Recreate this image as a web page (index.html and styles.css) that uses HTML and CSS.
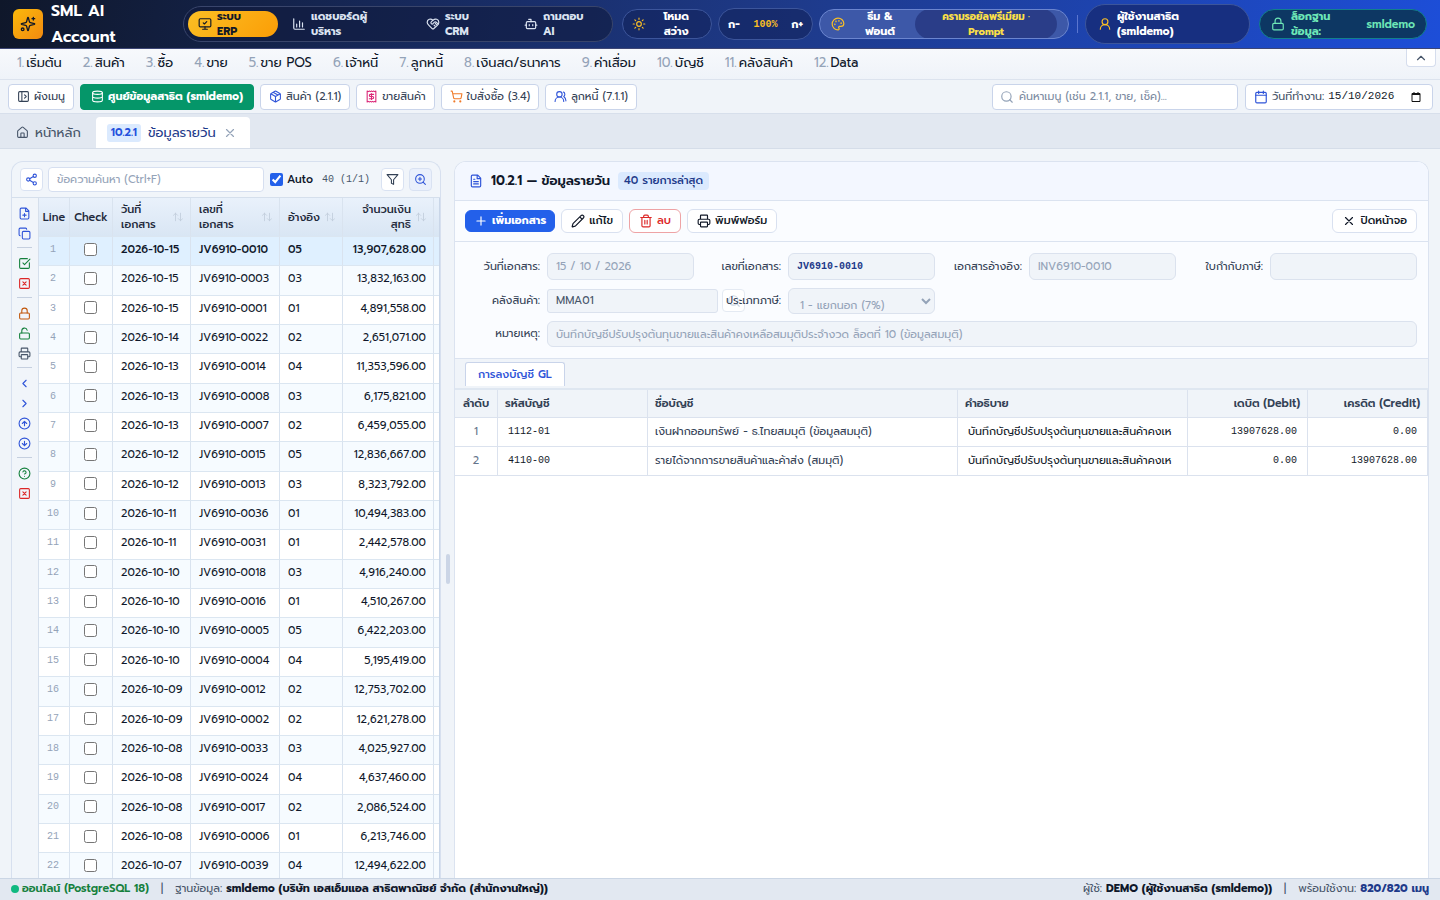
FILE: index.html
```html
<!DOCTYPE html>
<html lang="th">
<head>
<meta charset="utf-8">
<meta name="viewport" content="width=device-width, initial-scale=1">
<title>SML AI Account</title>
<link rel="stylesheet" href="styles.css">
</head>
<body>
<svg class="sprite" aria-hidden="true">
  <symbol id="sparkles" viewBox="0 0 24 24"><path d="M9.937 15.5A2 2 0 0 0 8.5 14.063l-6.135-1.582a.5.5 0 0 1 0-.962L8.5 9.936A2 2 0 0 0 9.937 8.5l1.582-6.135a.5.5 0 0 1 .963 0L14.063 8.5A2 2 0 0 0 15.5 9.937l6.135 1.581a.5.5 0 0 1 0 .964L15.5 14.063a2 2 0 0 0-1.437 1.437l-1.582 6.135a.5.5 0 0 1-.963 0z"/><path d="M20 2v4M22 4h-4"/><circle cx="4" cy="20" r="2"/></symbol>
  <symbol id="monitor" viewBox="0 0 24 24"><path d="m9 10 2 2 4-4"/><rect width="20" height="14" x="2" y="3" rx="2"/><path d="M12 17v4M8 21h8"/></symbol>
  <symbol id="chart" viewBox="0 0 24 24"><path d="M3 3v16a2 2 0 0 0 2 2h16M8 17v-5M13 17V7M18 17v-7"/></symbol>
  <symbol id="heart" viewBox="0 0 24 24"><path d="M19.4 14.4C21 12.9 22 11.200 22 9a5.500 5.500 0 0 0-9.600-3.600.6.6 0 0 1-.8 0A5.500 5.500 0 0 0 2 9c0 2.300 1.500 4 3 5.500l5.500 5.300a2 2 0 0 0 3 0z"/><path d="m12 5.500-3 3a2 2 0 0 0 3 2.800l2-2a3 3 0 0 1 4 0l2.500 2.500M15.500 15.500 13.800 14M18 13l-2-2"/></symbol>
  <symbol id="bot" viewBox="0 0 24 24"><path d="M12 8V4H8"/><rect width="16" height="12" x="4" y="8" rx="2"/><path d="M2 14h2M20 14h2M15 13v2M9 13v2"/></symbol>
  <symbol id="sun" viewBox="0 0 24 24"><circle cx="12" cy="12" r="4"/><path d="M12 2v2M12 20v2M4.900 4.900l1.400 1.400M17.700 17.700l1.400 1.400M2 12h2M20 12h2M6.300 17.700l-1.400 1.400M19.100 4.900l-1.400 1.400"/></symbol>
  <symbol id="palette" viewBox="0 0 24 24"><path d="M12 22a1 1 0 0 1 0-20 10 9 0 0 1 10 9 5 5 0 0 1-5 5h-2.250a1.750 1.750 0 0 0-1.400 2.800l.3.4a1.750 1.750 0 0 1-1.400 2.800z"/><circle cx="13.500" cy="6.500" r=".5"/><circle cx="17.500" cy="10.500" r=".5"/><circle cx="6.500" cy="12.500" r=".5"/><circle cx="8.500" cy="7.500" r=".5"/></symbol>
  <symbol id="user" viewBox="0 0 24 24"><circle cx="12" cy="8" r="5"/><path d="M20 21a8 8 0 0 0-16 0"/></symbol>
  <symbol id="lock" viewBox="0 0 24 24"><rect width="18" height="11" x="3" y="11" rx="2"/><path d="M7 11V7a5 5 0 0 1 10 0v4"/></symbol>
  <symbol id="unlock" viewBox="0 0 24 24"><rect width="18" height="11" x="3" y="11" rx="2"/><path d="M7 11V7a5 5 0 0 1 9.900-1"/></symbol>
  <symbol id="panel" viewBox="0 0 24 24"><rect width="18" height="18" x="3" y="3" rx="2"/><path d="M9 3v18M14 9l3 3-3 3"/></symbol>
  <symbol id="database" viewBox="0 0 24 24"><ellipse cx="12" cy="5" rx="9" ry="3"/><path d="M3 5v14a9 3 0 0 0 18 0V5M3 12a9 3 0 0 0 18 0"/></symbol>
  <symbol id="box" viewBox="0 0 24 24"><path d="M11 21.700a2 2 0 0 0 2 0l7-4a2 2 0 0 0 1-1.700V8a2 2 0 0 0-1-1.700l-7-4a2 2 0 0 0-2 0l-7 4A2 2 0 0 0 3 8v8a2 2 0 0 0 1 1.700zM12 22V12M3.300 7 12 12l8.700-5M7.500 4.300l9 5.100"/></symbol>
  <symbol id="receipt" viewBox="0 0 24 24"><path d="M4 2v20l2-1 2 1 2-1 2 1 2-1 2 1 2-1 2 1V2l-2 1-2-1-2 1-2-1-2 1-2-1-2 1z"/><path d="M16 8h-6a2 2 0 1 0 0 4h4a2 2 0 1 1 0 4H8M12 17.500v-11"/></symbol>
  <symbol id="cart" viewBox="0 0 24 24"><circle cx="8" cy="21" r="1"/><circle cx="19" cy="21" r="1"/><path d="M2 2h2l2.700 12.400a2 2 0 0 0 2 1.600h9.800a2 2 0 0 0 2-1.600L22 7H5.100"/></symbol>
  <symbol id="users" viewBox="0 0 24 24"><path d="M18 21a8 8 0 0 0-16 0"/><circle cx="10" cy="8" r="5"/><path d="M22 20c0-3.400-2-6.500-4-8a5 5 0 0 0-.4-8.300"/></symbol>
  <symbol id="search" viewBox="0 0 24 24"><circle cx="11" cy="11" r="8"/><path d="m21 21-4.300-4.300"/></symbol>
  <symbol id="calendar" viewBox="0 0 24 24"><path d="M8 2v4M16 2v4M3 9h18"/><rect width="18" height="18" x="3" y="4" rx="2"/></symbol>
  <symbol id="native-calendar" viewBox="0 0 24 24"><path d="M4 5h16v16H4zM4 7h16M8 2v3M16 2v3"/></symbol>
  <symbol id="up" viewBox="0 0 24 24"><path d="m18 15-6-6-6 6"/></symbol>
  <symbol id="left" viewBox="0 0 24 24"><path d="m15 18-6-6 6-6"/></symbol>
  <symbol id="right" viewBox="0 0 24 24"><path d="m9 18 6-6-6-6"/></symbol>
  <symbol id="home" viewBox="0 0 24 24"><path d="M15 21v-7a1 1 0 0 0-1-1h-4a1 1 0 0 0-1 1v7"/><path d="M3 10a2 2 0 0 1 .7-1.500l7-6a2 2 0 0 1 2.600 0l7 6A2 2 0 0 1 21 10v9a2 2 0 0 1-2 2H5a2 2 0 0 1-2-2z"/></symbol>
  <symbol id="x" viewBox="0 0 24 24"><path d="M18 6 6 18M6 6l12 12"/></symbol>
  <symbol id="share" viewBox="0 0 24 24"><circle cx="18" cy="5" r="3"/><circle cx="6" cy="12" r="3"/><circle cx="18" cy="19" r="3"/><path d="m8.600 13.500 6.800 4M15.400 6.500l-6.800 4"/></symbol>
  <symbol id="funnel" viewBox="0 0 24 24"><path d="M22 3H2l8 9.500V19l4 2v-8.500z"/></symbol>
  <symbol id="zoom" viewBox="0 0 24 24"><circle cx="11" cy="11" r="8"/><path d="m21 21-4.300-4.300M11 8v6M8 11h6"/></symbol>
  <symbol id="file-plus" viewBox="0 0 24 24"><path d="M15 2H6a2 2 0 0 0-2 2v16a2 2 0 0 0 2 2h12a2 2 0 0 0 2-2V7zM14 2v6h6M9 15h6M12 12v6"/></symbol>
  <symbol id="copy" viewBox="0 0 24 24"><rect width="14" height="14" x="8" y="8" rx="2"/><path d="M4 16a2 2 0 0 1-2-2V4a2 2 0 0 1 2-2h10a2 2 0 0 1 2 2"/></symbol>
  <symbol id="check-square" viewBox="0 0 24 24"><path d="M21 10.700V19a2 2 0 0 1-2 2H5a2 2 0 0 1-2-2V5a2 2 0 0 1 2-2h12.300M9 11l3 3L22 4"/></symbol>
  <symbol id="x-square" viewBox="0 0 24 24"><rect width="18" height="18" x="3" y="3" rx="2"/><path d="m15 9-6 6M9 9l6 6"/></symbol>
  <symbol id="printer" viewBox="0 0 24 24"><path d="M6 18H4a2 2 0 0 1-2-2v-5a2 2 0 0 1 2-2h16a2 2 0 0 1 2 2v5a2 2 0 0 1-2 2h-2M6 9V3a1 1 0 0 1 1-1h10a1 1 0 0 1 1 1v6"/><rect width="12" height="8" x="6" y="14" rx="1"/></symbol>
  <symbol id="circle-up" viewBox="0 0 24 24"><circle cx="12" cy="12" r="10"/><path d="m16 12-4-4-4 4M12 16V8"/></symbol>
  <symbol id="circle-down" viewBox="0 0 24 24"><circle cx="12" cy="12" r="10"/><path d="m8 12 4 4 4-4M12 8v8"/></symbol>
  <symbol id="help" viewBox="0 0 24 24"><circle cx="12" cy="12" r="10"/><path d="M9.100 9a3 3 0 0 1 5.800 1c0 2-3 3-3 3M12 17h.01"/></symbol>
  <symbol id="file-text" viewBox="0 0 24 24"><path d="M15 2H6a2 2 0 0 0-2 2v16a2 2 0 0 0 2 2h12a2 2 0 0 0 2-2V7zM14 2v6h6M10 9H8M16 13H8M16 17H8"/></symbol>
  <symbol id="plus" viewBox="0 0 24 24"><path d="M5 12h14M12 5v14"/></symbol>
  <symbol id="pencil" viewBox="0 0 24 24"><path d="M21.200 6.800a1 1 0 0 0-4-4L3.800 16.200a2 2 0 0 0-.5.8L2 21.400a.5.5 0 0 0 .6.6L7 20.700a2 2 0 0 0 .8-.5zM15 5l4 4"/></symbol>
  <symbol id="trash" viewBox="0 0 24 24"><path d="M3 6h18M19 6v14a2 2 0 0 1-2 2H7a2 2 0 0 1-2-2V6M8 6V4a2 2 0 0 1 2-2h4a2 2 0 0 1 2 2v2M10 11v6M14 11v6"/></symbol>
  <symbol id="sort" viewBox="0 0 24 24"><path d="m1 8 5-5 5 5M6 3v18M13 16l5 5 5-5M18 3v18"/></symbol>
</svg>

<header class="topbar">
  <div class="brand"><span class="logo"><svg class="icon icon-lg"><use href="#sparkles"/></svg></span><strong>SML AI<br>Account</strong></div>
  <nav class="modes">
    <button class="mode active"><svg class="icon"><use href="#monitor"/></svg><span>ระบบ<br>ERP</span></button>
    <button class="mode wide"><svg class="icon"><use href="#chart"/></svg><span>แดชบอร์ดผู้<br>บริหาร</span></button>
    <button class="mode"><svg class="icon"><use href="#heart"/></svg><span>ระบบ<br>CRM</span></button>
    <button class="mode"><svg class="icon"><use href="#bot"/></svg><span>ถามตอบ<br>AI</span></button>
  </nav>
  <button class="pill light-mode"><svg class="icon gold"><use href="#sun"/></svg><span>โหมด<br>สว่าง</span></button>
  <div class="pill font-size"><button>ก-</button><span class="mono gold">100%</span><button>ก+</button></div>
  <button class="pill theme"><svg class="icon gold"><use href="#palette"/></svg><span class="theme-name">ธีม &amp;<br>ฟอนต์</span><span class="theme-value">ครามรอยัลพรีเมียม ·<br>Prompt</span></button>
  <span class="divider"></span>
  <div class="pill account"><svg class="icon gold"><use href="#user"/></svg><span>ผู้ใช้งานสาธิต<br>(smldemo)</span></div>
  <div class="pill db"><svg class="icon"><use href="#lock"/></svg><span>ล็อกฐาน<br>ข้อมูล:</span><b>smldemo</b></div>
</header>

<nav class="menu">
  <a href="#"><i>1.</i>เริ่มต้น</a><a href="#"><i>2.</i>สินค้า</a><a href="#"><i>3.</i>ซื้อ</a><a href="#"><i>4.</i>ขาย</a><a href="#"><i>5.</i>ขาย POS</a><a href="#"><i>6.</i>เจ้าหนี้</a><a href="#"><i>7.</i>ลูกหนี้</a><a href="#"><i>8.</i>เงินสด/ธนาคาร</a><a href="#"><i>9.</i>ค่าเสื่อม</a><a href="#"><i>10.</i>บัญชี</a><a href="#"><i>11.</i>คลังสินค้า</a><a href="#"><i>12.</i>Data</a>
  <button class="collapse" aria-label="ย่อเมนู"><svg class="icon"><use href="#up"/></svg></button>
</nav>

<div class="shortcuts">
  <button class="shortcut"><svg class="icon"><use href="#panel"/></svg>ผังเมนู</button>
  <button class="shortcut center"><svg class="icon"><use href="#database"/></svg>ศูนย์ข้อมูลสาธิต (smldemo)</button>
  <button class="shortcut"><svg class="icon blue"><use href="#box"/></svg>สินค้า (2.1.1)</button>
  <button class="shortcut"><svg class="icon pink"><use href="#receipt"/></svg>ขายสินค้า</button>
  <button class="shortcut"><svg class="icon orange"><use href="#cart"/></svg>ใบสั่งซื้อ (3.4)</button>
  <button class="shortcut"><svg class="icon blue"><use href="#users"/></svg>ลูกหนี้ (7.1.1)</button>
  <label class="search"><svg class="icon"><use href="#search"/></svg><input type="text" aria-label="ค้นหาเมนู" placeholder="ค้นหาเมนู (เช่น 2.1.1, ขาย, เช็ค)..."></label>
  <div class="workdate"><svg class="icon blue"><use href="#calendar"/></svg><label for="workdate">วันที่ทำงาน:</label><input class="mono" id="workdate" type="text" value="15/10/2026"><button aria-label="เลือกวันที่"><svg class="icon icon-sm"><use href="#native-calendar"/></svg></button></div>
</div>

<div class="tabs">
  <a class="tab" href="#"><svg class="icon"><use href="#home"/></svg>หน้าหลัก</a>
  <div class="tab current"><b>10.2.1</b><a href="#">ข้อมูลรายวัน</a><button aria-label="ปิดแท็บ"><svg class="icon"><use href="#x"/></svg></button></div>
</div>

<main class="workspace">
  <section class="list">
    <div class="list-tools">
      <button class="square blue" aria-label="แชร์"><svg class="icon"><use href="#share"/></svg></button>
      <input class="find" type="text" aria-label="ค้นหา" placeholder="ข้อความค้นหา (Ctrl+F)">
      <label class="auto"><input type="checkbox" checked>Auto</label>
      <span class="count mono">40 (1/1)</span>
      <button class="square" aria-label="ตัวกรอง"><svg class="icon"><use href="#funnel"/></svg></button>
      <button class="square tinted" aria-label="ขยาย"><svg class="icon"><use href="#zoom"/></svg></button>
    </div>
    <div class="list-body">
      <div class="rail">
        <button class="blue" aria-label="เพิ่ม"><svg class="icon"><use href="#file-plus"/></svg></button>
        <button class="blue" aria-label="คัดลอก"><svg class="icon"><use href="#copy"/></svg></button>
        <hr>
        <button class="green" aria-label="เลือกทั้งหมด"><svg class="icon"><use href="#check-square"/></svg></button>
        <button class="red" aria-label="ไม่เลือก"><svg class="icon"><use href="#x-square"/></svg></button>
        <hr>
        <button class="rust" aria-label="ล็อก"><svg class="icon"><use href="#lock"/></svg></button>
        <button class="green" aria-label="ปลดล็อก"><svg class="icon"><use href="#unlock"/></svg></button>
        <button aria-label="พิมพ์"><svg class="icon"><use href="#printer"/></svg></button>
        <hr>
        <button class="blue" aria-label="ก่อนหน้า"><svg class="icon"><use href="#left"/></svg></button>
        <button class="blue" aria-label="ถัดไป"><svg class="icon"><use href="#right"/></svg></button>
        <button class="blue" aria-label="แรกสุด"><svg class="icon"><use href="#circle-up"/></svg></button>
        <button class="blue" aria-label="ท้ายสุด"><svg class="icon"><use href="#circle-down"/></svg></button>
        <hr>
        <button class="green" aria-label="ช่วยเหลือ"><svg class="icon"><use href="#help"/></svg></button>
        <button class="red" aria-label="ปิด"><svg class="icon"><use href="#x-square"/></svg></button>
      </div>
      <div class="grid-wrap">
        <table class="docs">
          <colgroup><col class="c-line"><col class="c-check"><col class="c-date"><col class="c-doc"><col class="c-ref"><col class="c-amount"><col class="c-more"></colgroup>
          <thead><tr>
            <th class="mid">Line</th><th class="mid">Check</th>
            <th><div class="sortable"><span>วันที่<br>เอกสาร</span><svg class="icon"><use href="#sort"/></svg></div></th>
            <th><div class="sortable"><span>เลขที่<br>เอกสาร</span><svg class="icon"><use href="#sort"/></svg></div></th>
            <th><div class="sortable"><span>อ้างอิง</span><svg class="icon"><use href="#sort"/></svg></div></th>
            <th><div class="sortable end"><span>จำนวนเงิน<br>สุทธิ</span><svg class="icon"><use href="#sort"/></svg></div></th>
            <th></th>
          </tr></thead>
          <tbody id="rows"></tbody>
        </table>
      </div>
    </div>
  </section>
  <div class="splitter"><span></span></div>
  <section class="detail">
    <h1 class="detail-title"><svg class="icon blue"><use href="#file-text"/></svg>10.2.1 — ข้อมูลรายวัน<span>40 รายการล่าสุด</span></h1>
    <div class="actions">
      <button class="action primary"><svg class="icon"><use href="#plus"/></svg>เพิ่มเอกสาร</button>
      <button class="action"><svg class="icon"><use href="#pencil"/></svg>แก้ไข</button>
      <button class="action danger"><svg class="icon"><use href="#trash"/></svg>ลบ</button>
      <button class="action"><svg class="icon"><use href="#printer"/></svg>พิมพ์ฟอร์ม</button>
      <button class="action close"><svg class="icon"><use href="#x"/></svg>ปิดหน้าจอ</button>
    </div>
    <form class="form">
      <label for="f-date">วันที่เอกสาร:</label><input id="f-date" value="15 / 10 / 2026" disabled>
      <label for="f-doc">เลขที่เอกสาร:</label><input class="mono docno" id="f-doc" value="JV6910-0010" disabled>
      <label for="f-ref">เอกสารอ้างอิง:</label><input id="f-ref" value="INV6910-0010" disabled>
      <label for="f-tax">ใบกำกับภาษี:</label><input id="f-tax" value="" disabled>
      <label for="f-wh">คลังสินค้า:</label>
      <div class="lookup"><input id="f-wh" value="MMA01" disabled><button type="button" aria-label="ค้นหาคลัง" disabled><svg class="icon"><use href="#search"/></svg></button></div>
      <label class="over" for="f-vat">ประเภทภาษี:</label>
      <div class="vat"><select id="f-vat" disabled><option>1 - แยกนอก (7%)</option></select></div>
      <label class="row3" for="f-note">หมายเหตุ:</label><input class="note" id="f-note" value="บันทึกบัญชีปรับปรุงต้นทุนขายและสินค้าคงเหลือสมมุติประจำงวด ล็อตที่ 10 (ข้อมูลสมมุติ)" disabled>
    </form>
    <div class="subtabs"><button>การลงบัญชี GL</button></div>
    <table class="gl">
      <colgroup><col class="g-no"><col class="g-code"><col class="g-name"><col class="g-desc"><col class="g-num"><col class="g-num"></colgroup>
      <thead><tr><th class="mid">ลำดับ</th><th>รหัสบัญชี</th><th>ชื่อบัญชี</th><th>คำอธิบาย</th><th class="num">เดบิต (Debit)</th><th class="num">เครดิต (Credit)</th></tr></thead>
      <tbody>
        <tr><td class="mid">1</td><td class="mono inset">1112-01</td><td>เงินฝากออมทรัพย์ - ธ.ไทยสมมุติ (ข้อมูลสมมุติ)</td><td class="inset"><div class="clip">บันทึกบัญชีปรับปรุงต้นทุนขายและสินค้าคงเห</div></td><td class="num mono inset">13907628.00</td><td class="num mono inset">0.00</td></tr>
        <tr><td class="mid">2</td><td class="mono inset">4110-00</td><td>รายได้จากการขายสินค้าและค้าส่ง (สมมุติ)</td><td class="inset"><div class="clip">บันทึกบัญชีปรับปรุงต้นทุนขายและสินค้าคงเห</div></td><td class="num mono inset">0.00</td><td class="num mono inset">13907628.00</td></tr>
      </tbody>
    </table>
  </section>
</main>

<footer class="status">
  <span class="dot"></span><b class="online">ออนไลน์ (PostgreSQL 18)</b><span class="bar">|</span><span>ฐานข้อมูล: <b>smldemo (บริษัท เอสเอ็มแอล สาธิตพาณิชย์ จำกัด (สำนักงานใหญ่))</b></span>
  <span class="who">ผู้ใช้: <b>DEMO (ผู้ใช้งานสาธิต (smldemo))</b></span><span class="bar">|</span><span>พร้อมใช้งาน: <b class="ready">820/820 เมนู</b></span>
</footer>
<script src="app.js"></script>
</body>
</html>
```
FILE: app.js
```js
const docs = [
  ["2026-10-15", "0010", "05", "13,907,628.00"],
  ["2026-10-15", "0003", "03", "13,832,163.00"],
  ["2026-10-15", "0001", "01", "4,891,558.00"],
  ["2026-10-14", "0022", "02", "2,651,071.00"],
  ["2026-10-13", "0014", "04", "11,353,596.00"],
  ["2026-10-13", "0008", "03", "6,175,821.00"],
  ["2026-10-13", "0007", "02", "6,459,055.00"],
  ["2026-10-12", "0015", "05", "12,836,667.00"],
  ["2026-10-12", "0013", "03", "8,323,792.00"],
  ["2026-10-11", "0036", "01", "10,494,383.00"],
  ["2026-10-11", "0031", "01", "2,442,578.00"],
  ["2026-10-10", "0018", "03", "4,916,240.00"],
  ["2026-10-10", "0016", "01", "4,510,267.00"],
  ["2026-10-10", "0005", "05", "6,422,203.00"],
  ["2026-10-10", "0004", "04", "5,195,419.00"],
  ["2026-10-09", "0012", "02", "12,753,702.00"],
  ["2026-10-09", "0002", "02", "12,621,278.00"],
  ["2026-10-08", "0033", "03", "4,025,927.00"],
  ["2026-10-08", "0024", "04", "4,637,460.00"],
  ["2026-10-08", "0017", "02", "2,086,524.00"],
  ["2026-10-08", "0006", "01", "6,213,746.00"],
  ["2026-10-07", "0039", "04", "12,494,622.00"]
];

document.getElementById("rows").innerHTML = docs.map(([date, no, ref, amount], i) => `
  <tr>
    <td class="mid mono line">${i + 1}</td>
    <td class="mid"><input type="checkbox" aria-label="เลือกรายการ ${i + 1}"></td>
    <td>${date}</td><td>JV6910-${no}</td><td>${ref}</td><td class="num">${amount}</td><td></td>
  </tr>`).join("");
```
FILE: styles.css
```css
* { box-sizing: border-box; }
body {
  margin: 0;
  height: 100vh;
  display: flex;
  flex-direction: column;
  overflow: hidden;
  background: #f0f4f9;
  color: #0f172a;
  font: 12px/1.4 Prompt, "Noto Sans", "Noto Sans Thai", sans-serif;
}
button, input, select { font: inherit; color: inherit; }
button { padding: 0; border: 0; background: none; white-space: nowrap; cursor: pointer; }
a { color: inherit; text-decoration: none; }
.mono { font-family: "Liberation Mono", monospace; }
.sprite { position: absolute; width: 0; height: 0; }
.icon { width: 14px; height: 14px; flex: none; fill: none; stroke: currentColor; stroke-width: 2; stroke-linecap: round; stroke-linejoin: round; }
.icon-lg { width: 16px; height: 16px; }
.icon-sm { width: 12px; height: 12px; stroke-linecap: butt; stroke-linejoin: miter; }
.gold { color: #fbbf24; }
.blue { color: #2f54d8; }
.pink { color: #db2777; }
.orange { color: #f07a28; }
.green { color: #15803d; }
.red { color: #dc2626; }
.rust { color: #c2570c; }

.topbar {
  flex: none;
  height: 49px;
  display: flex;
  align-items: center;
  padding: 0 13px;
  border-bottom: 1px solid #3d4675;
  background: linear-gradient(100deg, #0f172a 0%, #1e3a8a 55%, #1d4ed8 100%);
  color: #fff;
  font-size: 11px;
  font-weight: 700;
  line-height: 15px;
  white-space: nowrap;
}
.brand { flex: 1 1 170px; display: flex; align-items: center; gap: 8px; font-size: 16px; line-height: 26px; }
.brand strong { font-weight: 600; }
.logo { display: grid; place-items: center; width: 30px; height: 30px; border-radius: 6px; background: linear-gradient(135deg, #fbb90b, #f28a10); color: #111827; }
.modes { flex: 1 1 430px; display: flex; gap: 4px; padding: 4px; border: 1px solid #39456b; border-radius: 18px; background: #101a3d99; }
.mode { flex: 1 1 94px; height: 26px; display: flex; align-items: center; gap: 5px; padding: 0 10px; border-radius: 13px; text-align: left; color: #dbe3f1; }
.mode.wide { flex-basis: 130px; }
.mode.active { flex-basis: 90px; background: linear-gradient(135deg, #fbbf24, #fb9d06); color: #111827; }
.pill { height: 30px; display: flex; align-items: center; border: 1px solid #3c559b; border-radius: 20px; background: #13235c99; }
.light-mode { flex: 1 1 90px; margin-left: 9px; padding: 0 22px 0 9px; justify-content: space-between; }
.font-size { flex: 1 1 95px; height: 32px; margin-left: 6px; padding: 0 9px; justify-content: space-between; }
.font-size .mono { font-size: 10px; }
.theme { flex: 1 1 250px; margin-left: 6px; padding: 0 11px; border-color: #6b85cf; background: #3d58a8; overflow: hidden; }
.theme-name { flex: 1; text-align: center; }
.theme-value { height: 30px; width: 142px; display: grid; place-items: center; text-align: center; border-radius: 15px; background: #26377fcc; color: #fde047; font-size: 10px; }
.divider { width: 1px; height: 18px; margin: 0 7px 0 8px; background: #5b76cf; }
.account { flex: 1 1 165px; height: 40px; gap: 5px; padding: 0 12px; background: #172f80; }
.db { flex: 1 1 168px; margin-left: 9px; padding: 0 11px; gap: 6px; border-color: #11808d; background: #0d3763; color: #6ee7b7; }
.db b { margin-left: auto; font-weight: 600; }

.menu { flex: none; height: 31px; display: flex; align-items: center; gap: 21px; padding: 0 17px 2px; border-bottom: 1px solid #dce3ee; background: linear-gradient(#f7f9fc, #eff3f9); font-size: 13px; line-height: 20px; white-space: nowrap; }
.menu i { font-style: normal; color: #94a3b8; margin-right: 2px; }
.collapse { width: 30px; height: 18px; align-self: flex-start; display: grid; place-items: center; margin: 0 -13px 0 auto; border: 1px solid #d5dded; border-top: 0; border-radius: 0 0 4px 4px; background: #fff; color: #475569; }

.shortcuts { flex: none; height: 34px; display: flex; align-items: center; gap: 6px; padding: 0 7px 0 8px; border-bottom: 1px solid #d7dfeb; background: #f0f4f9; font-size: 11px; }
.shortcut { height: 26px; display: flex; align-items: center; gap: 4px; padding: 0 8px; border: 1px solid #c9d4ea; border-radius: 4px; background: #fff; color: #334155; }
.shortcut .icon { width: 13px; height: 13px; }
.shortcut.center { padding: 0 10px; border-color: #059669; background: #059669; color: #fff; font-weight: 700; }
.search { width: 246px; height: 26px; margin-left: auto; display: flex; align-items: center; gap: 5px; padding: 0 7px; border: 1px solid #c9d4ea; border-radius: 4px; background: #fff; color: #94a3b8; }
.search input { flex: 1; min-width: 0; border: 0; padding: 0; background: none; }
.search input::placeholder { color: #7b8aa0; }
.workdate { width: 188px; height: 26px; margin-left: 1px; display: flex; align-items: center; gap: 4px; padding: 0 10px 0 8px; border: 1px solid #c9d4ea; border-radius: 4px; background: #fff; color: #475569; white-space: nowrap; }
.workdate input { flex: 1; min-width: 0; width: 70px; border: 0; padding: 0; background: none; color: #111827; }
.workdate button { color: #111; display: flex; }

.tabs { flex: none; height: 35px; display: flex; align-items: flex-end; border-bottom: 1px solid #d5dde9; background: #e2e8f1; font-size: 13px; line-height: 18px; }
.tab { height: 31px; display: flex; align-items: center; gap: 6px; padding: 0 15px 0 16px; color: #475569; }
.tab.current { gap: 7px; padding: 0 13px 0 11px; border-radius: 4px 4px 0 0; background: #fff; color: #1e3a8a; }
.tab b { padding: 0 4px; border-radius: 3px; background: #dbeafe; color: #2450dc; font-size: 11px; font-weight: 600; }
.tab button { display: flex; color: #94a3b8; }
.tab:first-child .icon { width: 13px; height: 13px; }

.workspace { flex: 1; min-height: 0; display: flex; padding: 12px 11px 0; }
.list { flex: 0 0 430px; display: flex; flex-direction: column; min-height: 0; border: 1px solid #d7e0ef; border-bottom: 0; border-radius: 12px 12px 0 0; background: #f1f5fa; overflow: hidden; }
.list-tools { flex: none; height: 36px; display: flex; align-items: center; padding: 0 8px; border-bottom: 1px solid #d5dfec; }
.square { width: 23px; height: 23px; display: grid; place-items: center; border: 1px solid #d9e2f2; border-radius: 4px; background: #fff; color: #334155; }
.square.blue { color: #2f54d8; }
.square.tinted { margin-left: 5px; background: #eaf0fc; color: #2f54d8; }
.square .icon { width: 13px; height: 13px; }
.find { flex: 1; min-width: 0; height: 25px; margin: 0 6px 0 5px; padding: 0 8px; border: 1px solid #d6dff0; border-radius: 4px; background: #fff; font-size: 11px; }
.find::placeholder { color: #94a3b8; }
.auto { display: flex; align-items: center; gap: 4px; font-size: 11px; font-weight: 500; }
.auto input { width: 13px; height: 13px; margin: 0; accent-color: #2360ea; }
.count { margin: 0 11px 0 9px; color: #475569; font-size: 10px; }
.list-body { flex: 1; min-height: 0; display: flex; }
.rail { flex: none; width: 27px; display: flex; flex-direction: column; align-items: center; padding: 5px 2px 0 0; border-right: 1px solid #d5dfec; color: #475569; }
.rail button { display: grid; place-items: center; height: 20px; }
.rail .icon { width: 13px; height: 13px; }
.rail hr { width: 15px; margin: 4px 0 5px; border: 0; border-top: 1px solid #c5cfdf; }
.grid-wrap { flex: 1; min-width: 0; overflow: hidden; background: #fff; border-right: 1px solid #c9d6e8; }
.docs { width: 402px; table-layout: fixed; border-collapse: separate; border-spacing: 0; font-size: 11px; line-height: 1.85; white-space: nowrap; }
.c-line { width: 31px; } .c-check { width: 43px; } .c-date { width: 78px; } .c-doc { width: 89px; } .c-ref { width: 63px; } .c-amount { width: 91px; } .c-more { width: 7px; }
.docs th, .docs td { padding: 3px 7px 5px 8px; border-right: 1px solid #d9e3ef; border-bottom: 1px solid #dbe6f1; text-align: left; overflow: hidden; }
.docs th { height: 39px; padding: 0 7px 0 8px; background: linear-gradient(#e9f1fb, #d9e6f4); color: #1e293b; font-weight: 500; line-height: 15px; }
.docs tr > :last-child { padding: 0; }
.docs .mid { padding-left: 0; padding-right: 2px; text-align: center; }
.docs th.mid { padding-right: 0; }
.docs .num { text-align: right; }
.docs .line { color: #94a3b8; font-size: 10px; }
.docs tbody tr:nth-child(even) { background: #f6fbff; }
.docs tbody tr:first-child { background: #dff0ff; font-weight: 500; }
.docs td input { display: block; width: 13px; height: 13px; margin: 0 auto 2px; }
.sortable { display: flex; align-items: center; justify-content: space-between; }
.sortable.end { justify-content: flex-end; gap: 5px; text-align: right; }
.sortable .icon { width: 10px; height: 10px; color: #c0ccdb; }
.splitter { flex: none; width: 13px; display: grid; place-items: center; padding-top: 98px; }
.splitter span { width: 4px; height: 30px; border-radius: 2px; background: #cbd5e6; }

.detail { flex: 1; min-width: 0; display: flex; flex-direction: column; border: 1px solid #dbe3f0; border-bottom: 0; border-radius: 12px 12px 0 0; background: #fff; overflow: hidden; }
.detail-title { flex: none; height: 39px; display: flex; align-items: center; gap: 8px; margin: 0; padding: 0 14px; border-bottom: 1px solid #dbe3f0; background: #f3f7ff; font-size: 13px; font-weight: 600; }
.detail-title span { padding: 1px 6px; border-radius: 4px; background: #dbeafe; color: #1e3a8a; font-size: 11px; font-weight: 500; }
.actions { flex: none; height: 41px; display: flex; align-items: center; gap: 6px; padding: 0 11px 0 10px; border-bottom: 1px solid #dbe3f0; background: #fafcff; }
.action { height: 24px; display: flex; align-items: center; gap: 4px; padding: 0 9px; border: 1px solid #d9e1f0; border-radius: 6px; background: #fff; color: #111827; font-size: 11px; font-weight: 500; }
.action.primary { height: 22px; padding: 0 8px; border-color: #2360ea; background: #2360ea; color: #fff; font-weight: 700; }
.action.danger { border-color: #eea3a5; color: #dc2626; }
.action.close { gap: 5px; margin-left: auto; }
.form { flex: none; display: grid; grid-template-columns: 82px minmax(0, 1fr) 94px minmax(0, 1fr) 94px minmax(0, 1fr) 94px minmax(0, 1fr); grid-template-rows: 27px 27px 26px; gap: 7px 0; padding: 11px 11px 11px 10px; border-bottom: 1px solid #dbe3f0; background: #fafcff; align-items: center; font-size: 11px; }
.form > label { padding-right: 7px; text-align: right; white-space: nowrap; color: #334155; }
.form input, .form select { width: 100%; min-width: 0; height: 100%; padding: 0 8px; border: 1px solid #dbe2ee; border-radius: 6px; background: #f0f4f9; color: #94a3b8; opacity: 1; }
.form input.docno { color: #1e3a8a; font-weight: 700; font-size: 10px; }
.form .note { grid-column: 2 / -1; }
.lookup { width: 198px; height: 24px; display: flex; align-items: center; gap: 4px; }
.form .lookup input { flex: 1; border-radius: 3px; color: #475569; }
.lookup button { width: 23px; height: 23px; display: grid; place-items: center; border: 1px solid #e4eaf3; border-radius: 4px; background: #fff; color: #cbd5e1; }
.form .over { z-index: 1; }
.vat { height: 26px; }
.form .vat select { padding: 7px 4px 0 7px; }
.form .row3 { grid-column: 1; }
.subtabs { flex: none; height: 31px; display: flex; align-items: flex-end; padding: 0 10px 2px; border-bottom: 2px solid #dfe7f1; background: #f0f4f9; }
.subtabs button { height: 24px; padding: 0 12px; border: 1px solid #c9d4ea; border-bottom: 0; border-radius: 3px 3px 0 0; background: #fff; color: #2f54d8; font-size: 11px; font-weight: 500; }
.gl { width: 100%; table-layout: fixed; border-collapse: separate; border-spacing: 0; font-size: 11px; line-height: 15px; white-space: nowrap; }
.g-no { width: 43px; } .g-code { width: 150px; } .g-name { width: 310px; } .g-desc { width: 230px; } .g-num { width: 120px; }
.gl th, .gl td { height: 29px; padding: 0 7px; border-right: 1px solid #dbe2ee; border-bottom: 1px solid #dbe2ee; text-align: left; overflow: hidden; }
.gl th { height: 28px; background: #f0f4f9; color: #334155; font-weight: 600; }
.gl td { padding-bottom: 2px; color: #334155; }
.gl .inset { padding: 0 10px 2px; color: #111827; }
.gl td.mono { font-size: 10px; }
.gl .num { text-align: right; }
.gl .mid { padding-left: 0; padding-right: 0; text-align: center; }
.gl td.mid { color: #64748b; }
.clip { overflow: hidden; }

.status { flex: none; height: 22px; display: flex; align-items: center; padding: 0 11px 2px; border-top: 1px solid #cbd6e5; background: #e2e8f1; color: #475569; font-size: 11px; line-height: 16px; white-space: nowrap; }
.status b { color: #0f172a; font-weight: 700; }
.dot { width: 8px; height: 8px; margin-right: 3px; border-radius: 50%; background: #10b981; }
.status .online { color: #15803d; font-weight: 600; }
.status .ready { color: #1e3a8a; }
.bar { margin: 0 12px; }
.who { margin-left: auto; }
```
